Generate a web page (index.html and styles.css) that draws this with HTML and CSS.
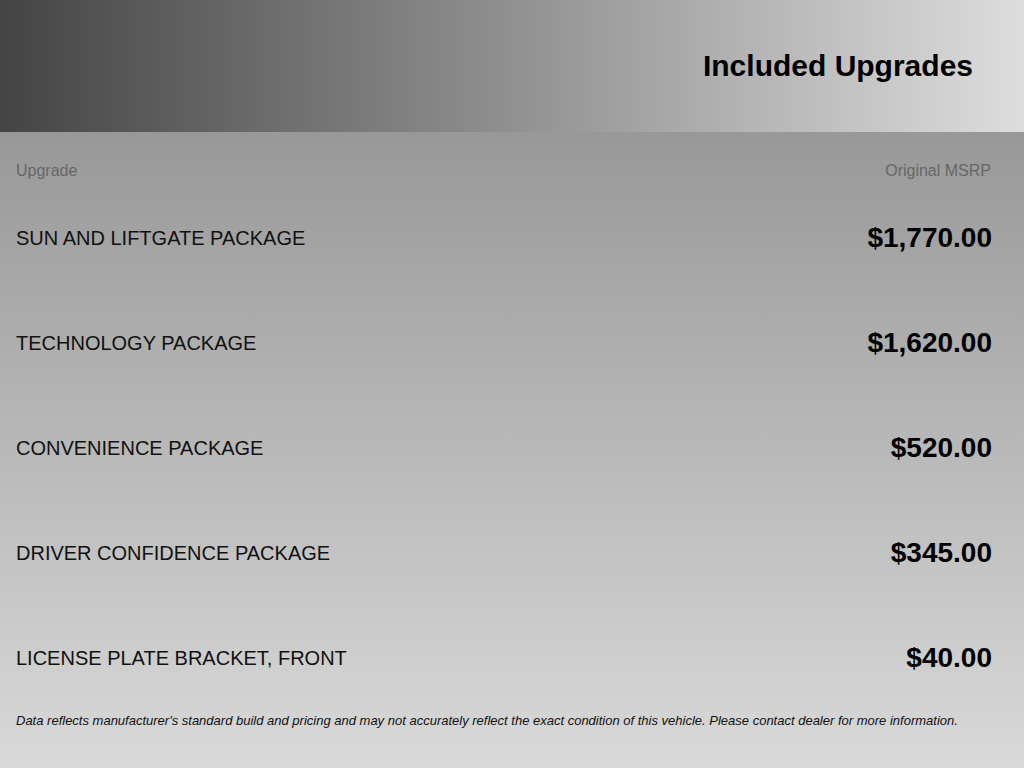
FILE: index.html
```html
<!DOCTYPE html>
<html lang="en">
<head>
<meta charset="utf-8">
<title>Included Upgrades</title>
<link rel="stylesheet" href="styles.css">
</head>
<body>
<header class="hero">
  <h1 class="title">Included Upgrades</h1>
</header>
<main class="content">
  <div class="labels">
    <span>Upgrade</span>
    <span class="msrp-label">Original MSRP</span>
  </div>
  <ul class="rows">
    <li class="row"><span class="name">SUN AND LIFTGATE PACKAGE</span><span class="price">$1,770.00</span></li>
    <li class="row"><span class="name">TECHNOLOGY PACKAGE</span><span class="price">$1,620.00</span></li>
    <li class="row"><span class="name">CONVENIENCE PACKAGE</span><span class="price">$520.00</span></li>
    <li class="row"><span class="name">DRIVER CONFIDENCE PACKAGE</span><span class="price">$345.00</span></li>
    <li class="row"><span class="name">LICENSE PLATE BRACKET, FRONT</span><span class="price">$40.00</span></li>
  </ul>
  <p class="note">Data reflects manufacturer's standard build and pricing and may not accurately reflect the exact condition of this vehicle. Please contact dealer for more information.</p>
</main>
</body>
</html>
```

FILE: styles.css
```css
* { box-sizing: border-box; }
html, body {
  margin: 0;
  padding: 0;
  height: 100%;
}
body {
  font-family: "Liberation Sans", Arial, sans-serif;
  color: #111;
  background: #d8d8d8;
  display: flex;
  flex-direction: column;
}
.hero {
  height: 132px;
  flex: none;
  background: linear-gradient(to right, #444444 0%, #dddddd 100%);
  display: flex;
  align-items: center;
  justify-content: flex-end;
  padding-right: 51px;
}
.title {
  margin: 0;
  font-size: 30px;
  font-weight: bold;
  color: #000;
  line-height: 34px;
}
.content {
  flex: 1;
  background: linear-gradient(to bottom, #989898 0%, #d9d9d9 100%);
  padding: 29px 32px 0 16px;
}
.labels {
  display: flex;
  justify-content: space-between;
  font-size: 16px;
  line-height: 20px;
  color: #666;
  padding-right: 1px;
}
.rows {
  list-style: none;
  margin: 41px 0 0;
  padding: 0;
  display: flex;
  flex-direction: column;
  gap: 73px;
}
.row {
  display: flex;
  justify-content: space-between;
  align-items: center;
  height: 32px;
}
.name {
  font-size: 20px;
  color: #111;
}
.price {
  font-size: 28px;
  font-weight: bold;
  color: #000;
}
.note {
  margin: 39px 0 0;
  font-size: 13px;
  line-height: 16px;
  font-style: italic;
  color: #111;
}
```
